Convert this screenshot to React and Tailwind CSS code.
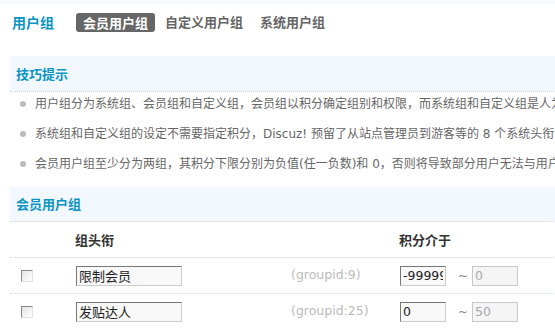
import React from 'react';

const tips = [
  '用户组分为系统组、会员组和自定义组，会员组以积分确定组别和权限，而系统组和自定义组是人为设定，不会由系统自动变更。',
  '系统组和自定义组的设定不需要指定积分，Discuz! 预留了从站点管理员到游客等的 8 个系统头衔，系统组中的用户只能由管理员手动设置。',
  '会员用户组至少分为两组，其积分下限分别为负值(任一负数)和 0，否则将导致部分用户无法与用户组正确对应。',
];

const groups = [
  { title: '限制会员', id: 9, low: '-999999', high: '0' },
  { title: '发贴达人', id: 25, low: '0', high: '50' },
];

function Checkbox() {
  return (
    <span className="block w-[12px] h-[12px] border border-t-[#8a8a8a] border-l-[#8a8a8a] border-b-[#e2e2e2] border-r-[#e2e2e2] bg-gradient-to-br from-[#e4e4e4] to-white" />
  );
}

function Band({ children }) {
  return (
    <div className="h-[36px] flex items-center pl-[6px] bg-[#f2f8fd] border-b border-dotted border-[#c9d8e4] text-[13px] font-bold text-[#0a94c4]">
      {children}
    </div>
  );
}

export default function App() {
  return (
    <div
      className="w-[555px] h-[329px] overflow-hidden bg-white text-[#555]"
      style={{ fontFamily: '"Noto Sans CJK SC", "DejaVu Sans", sans-serif' }}
    >
      <div className="h-[4px] bg-[#f6f9fc]" />

      {/* title + tabs */}
      <div className="h-[36px] flex items-center pl-[12px]">
        <h3 className="text-[14px] font-bold text-[#0a94c4] mr-[19px]">用户组</h3>
        <span className="ml-[3px] px-[7px] h-[19px] leading-[19px] rounded-[3px] bg-[#666] text-white text-[13px] font-bold">
          会员用户组
        </span>
        <span className="ml-[3px] px-[7px] text-[13px] font-bold text-[#666]">自定义用户组</span>
        <span className="ml-[3px] px-[7px] text-[13px] font-bold text-[#666]">系统用户组</span>
      </div>

      <div className="pl-[10px] mt-[16px] w-[900px]">
        <Band>技巧提示</Band>
        <ul
          className="flex flex-col gap-[6px] text-[12px] text-[#666] whitespace-nowrap"
          style={{ fontFamily: '"DejaVu Sans", "Noto Sans CJK SC", sans-serif' }}
        >
          {tips.map((t) => (
            <li key={t} className="h-[24px] flex items-center">
              <span className="w-[6px] h-[6px] rounded-full bg-[#bbb] ml-[10px] mr-[9px]" />
              {t}
            </li>
          ))}
        </ul>

        <div className="mt-[10px]">
          <Band>会员用户组</Band>
        </div>

        {/* header row */}
        <div className="h-[36px] flex items-center border-b border-dotted border-[#c9d8e4] text-[13px] font-bold text-[#333]">
          <div className="w-[65px]" />
          <div className="w-[324px]">组头衔</div>
          <div>积分介于</div>
        </div>

        {groups.map((g) => (
          <div
            key={g.id}
            className="h-[36px] flex items-center border-b border-dotted border-[#c9d8e4]"
          >
            <div className="w-[65px] pl-[11px]">
              <Checkbox />
            </div>
            <div className="w-[215px] pl-[1px]">
              <input
                readOnly
                value={g.title}
                className="block w-[106px] h-[20px] px-[2px] border border-t-[#777] border-l-[#777] border-b-[#ccc] border-r-[#ccc] bg-[#f8f8f8] text-[13px] text-[#222] outline-none"
              />
            </div>
            <div
              className="w-[109px] pl-[1px] text-[12.5px] text-[#bbb]"
              style={{ fontFamily: '"DejaVu Sans", sans-serif' }}
            >
              (groupid:{g.id})
            </div>
            <div
              className="flex items-center pl-[1px]"
              style={{ fontFamily: '"DejaVu Sans", sans-serif' }}
            >
              <input
                readOnly
                value={g.low}
                className="block w-[46px] h-[20px] px-[2px] border border-t-[#777] border-l-[#777] border-b-[#ccc] border-r-[#ccc] bg-[#f8f8f8] text-[12.5px] text-[#222] outline-none"
              />
              <span className="ml-[12px] mr-[4px] text-[12px] text-[#888]">~</span>
              <input
                readOnly
                value={g.high}
                className="block w-[46px] h-[20px] px-[2px] border border-[#c8c8c8] bg-[#f5f5f5] text-[12.5px] text-[#aaa] outline-none"
              />
            </div>
          </div>
        ))}
      </div>
    </div>
  );
}
